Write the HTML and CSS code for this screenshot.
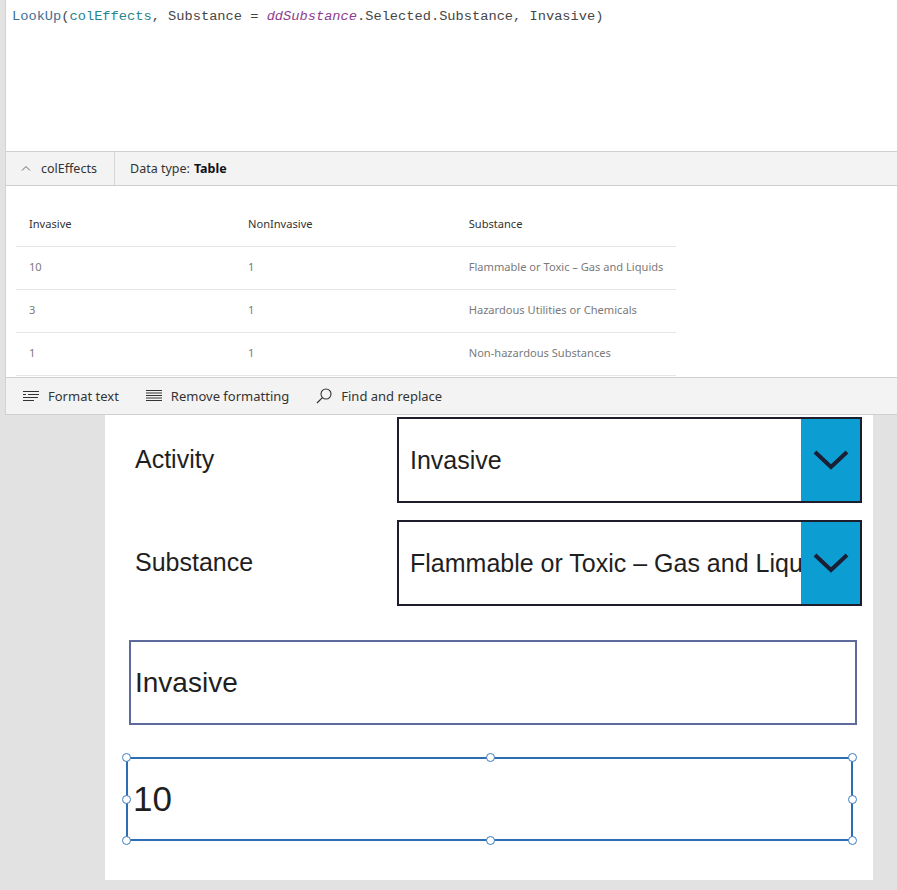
FILE: index.html
```html
<!DOCTYPE html>
<html>
<head>
<meta charset="utf-8">
<link rel="stylesheet" href="styles.css">
</head>
<body>
<div class="editor">
  <div class="formula"><span class="fn">LookUp</span>(<span class="coll">colEffects</span>, Substance = <span class="ctrl">ddSubstance</span>.Selected.Substance, Invasive)</div>
  <div class="resultbar">
    <div class="rb-name">
      <svg class="caret" width="10" height="6" viewBox="0 0 10 6"><path d="M1 5.5 L5 1.5 L9 5.5" fill="none" stroke="#666" stroke-width="1"/></svg>
      <span>colEffects</span>
    </div>
    <div class="rb-type">Data type: <b>Table</b></div>
  </div>
  <div class="results">
    <table class="grid">
      <thead>
        <tr><th>Invasive</th><th>NonInvasive</th><th>Substance</th></tr>
      </thead>
      <tbody>
        <tr><td>10</td><td>1</td><td>Flammable or Toxic – Gas and Liquids</td></tr>
        <tr><td>3</td><td>1</td><td>Hazardous Utilities or Chemicals</td></tr>
        <tr><td>1</td><td>1</td><td>Non-hazardous Substances</td></tr>
      </tbody>
    </table>
  </div>
  <div class="toolbar">
    <div class="tool">
      <svg width="16" height="12" viewBox="0 0 16 12"><g stroke="#333" stroke-width="1"><line x1="0" y1="1.5" x2="16" y2="1.5"/><line x1="5" y1="4.5" x2="16" y2="4.5"/><line x1="0" y1="7.5" x2="15" y2="7.5"/><line x1="0" y1="10.5" x2="11" y2="10.5"/></g><line x1="0" y1="4.5" x2="3" y2="4.5" stroke="#333"/></svg>
      <span>Format text</span>
    </div>
    <div class="tool">
      <svg width="16" height="14" viewBox="0 0 16 14"><g stroke="#333" stroke-width="1"><line x1="0" y1="1.5" x2="16" y2="1.5"/><line x1="0" y1="4" x2="16" y2="4"/><line x1="0" y1="6.5" x2="16" y2="6.5"/><line x1="0" y1="9" x2="16" y2="9"/><line x1="0" y1="11.5" x2="16" y2="11.5"/></g></svg>
      <span>Remove formatting</span>
    </div>
    <div class="tool">
      <svg width="16" height="16" viewBox="0 0 16 16"><circle cx="10" cy="6" r="5" fill="none" stroke="#333" stroke-width="1.1"/><line x1="6.4" y1="9.6" x2="1" y2="15" stroke="#333" stroke-width="1.2"/></svg>
      <span>Find and replace</span>
    </div>
  </div>
</div>
<div class="stage">
  <div class="canvas">
    <div class="row">
      <div class="label">Activity</div>
      <div class="dropdown">
        <div class="dd-value">Invasive</div>
        <div class="dd-btn"><svg width="36" height="20" viewBox="0 0 36 20"><path d="M2 2 L18 17 L34 2" fill="none" stroke="#1b1f36" stroke-width="4"/></svg></div>
      </div>
    </div>
    <div class="row row-second">
      <div class="label">Substance</div>
      <div class="dropdown">
        <div class="dd-value">Flammable or Toxic – Gas and Liquids</div>
        <div class="dd-btn"><svg width="36" height="20" viewBox="0 0 36 20"><path d="M2 2 L18 17 L34 2" fill="none" stroke="#1b1f36" stroke-width="4"/></svg></div>
      </div>
    </div>
    <div class="textinput">Invasive</div>
    <div class="selected">
      <span class="sel-text">10</span>
      <span class="h h-tl"></span><span class="h h-tc"></span><span class="h h-tr"></span>
      <span class="h h-ml"></span><span class="h h-mr"></span>
      <span class="h h-bl"></span><span class="h h-bc"></span><span class="h h-br"></span>
    </div>
  </div>
</div>
</body>
</html>
```

FILE: styles.css
```css
html, body {
  margin: 0;
  padding: 0;
}
body {
  background: #e2e2e2;
  width: 897px;
  height: 890px;
  overflow: hidden;
  font-family: "Noto Sans", "Open Sans", sans-serif;
}
.editor {
  margin-left: 5px;
  border-left: 1px solid #d2d2d2;
  background: #ffffff;
}
.formula {
  height: 143px;
  padding: 8px 0 0 6px;
  font-family: "Liberation Mono", "DejaVu Sans Mono", monospace;
  font-size: 13.7px;
  line-height: 17px;
  color: #464646;
  white-space: pre;
}
.fn { color: #3c6e96; }
.coll { color: #23858f; }
.ctrl { color: #8d3d8d; font-style: italic; }
.resultbar {
  height: 33px;
  background: #f3f3f3;
  border-top: 1px solid #cfcfcf;
  border-bottom: 1px solid #cfcfcf;
  display: flex;
  align-items: stretch;
  font-size: 12.5px;
  color: #333;
}
.rb-name {
  display: flex;
  align-items: center;
  gap: 10px;
  padding-left: 15px;
  width: 93px;
  border-right: 1px solid #d6d6d6;
}
.caret { margin-top: -1px; }
.rb-type {
  display: flex;
  align-items: center;
  padding-left: 15px;
  gap: 4px;
}
.rb-type b { font-weight: 700; color: #111; }
.results {
  height: 191px;
  padding: 18px 0 0 10px;
  box-sizing: border-box;
}
.grid {
  border-collapse: collapse;
  width: 660px;
  font-size: 11.1px;
  line-height: 14px;
}
.grid th, .grid td {
  width: 220px;
  height: 39px;
  padding: 0 0 3px 13px;
  text-align: left;
  border-bottom: 1px solid #e6e6e6;
  vertical-align: middle;
}
.grid th {
  font-weight: 400;
  color: #333;
}
.grid td { color: #7a7a7a; }
.toolbar {
  height: 36px;
  background: #f3f3f3;
  border-top: 1px solid #cfcfcf;
  border-bottom: 1px solid #cfcfcf;
  display: flex;
  align-items: center;
  padding-left: 17px;
  gap: 27px;
  font-size: 13px;
  color: #333;
}
.tool {
  display: flex;
  align-items: center;
  gap: 9px;
}
.stage {
  display: flex;
  padding-left: 105px;
}
.canvas {
  width: 768px;
  height: 465px;
  background: #ffffff;
  padding-top: 2px;
  box-sizing: border-box;
  font-family: "Liberation Sans", Arial, sans-serif;
  color: #1f1f1f;
}
.row {
  display: flex;
  align-items: center;
  height: 86px;
}
.row-second { margin-top: 17px; }
.label {
  width: 262px;
  padding-left: 30px;
  padding-bottom: 1px;
  font-size: 25px;
}
.dropdown {
  width: 465px;
  height: 86px;
  box-sizing: border-box;
  border: 2px solid #1d1d2b;
  display: flex;
  overflow: hidden;
}
.dd-value {
  flex: 1;
  min-width: 0;
  padding-left: 11px;
  font-size: 25px;
  white-space: nowrap;
  overflow: hidden;
  display: flex;
  align-items: center;
}
.dd-btn {
  width: 59px;
  flex: none;
  background: #0c9ed2;
  display: flex;
  align-items: center;
  justify-content: center;
}
.textinput {
  margin: 34px 0 0 24px;
  width: 728px;
  height: 85px;
  box-sizing: border-box;
  border: 2px solid #5f6a9c;
  padding-left: 4px;
  display: flex;
  align-items: center;
  font-size: 28px;
}
.selected {
  position: relative;
  margin: 32px 0 0 21px;
  width: 727px;
  height: 84px;
  box-sizing: border-box;
  border: 2px solid #2c6db4;
  padding-left: 5px;
  display: flex;
  align-items: center;
  font-size: 35px;
}
.h {
  position: absolute;
  width: 7px;
  height: 7px;
  border: 1.5px solid #3a7cc4;
  border-radius: 50%;
  background: #ffffff;
}
.h-tl { left: -6px; top: -6px; }
.h-tc { left: 358px; top: -6px; }
.h-tr { right: -6px; top: -6px; }
.h-ml { left: -6px; top: 36px; }
.h-mr { right: -6px; top: 36px; }
.h-bl { left: -6px; bottom: -6px; }
.h-bc { left: 358px; bottom: -6px; }
.h-br { right: -6px; bottom: -6px; }
```
